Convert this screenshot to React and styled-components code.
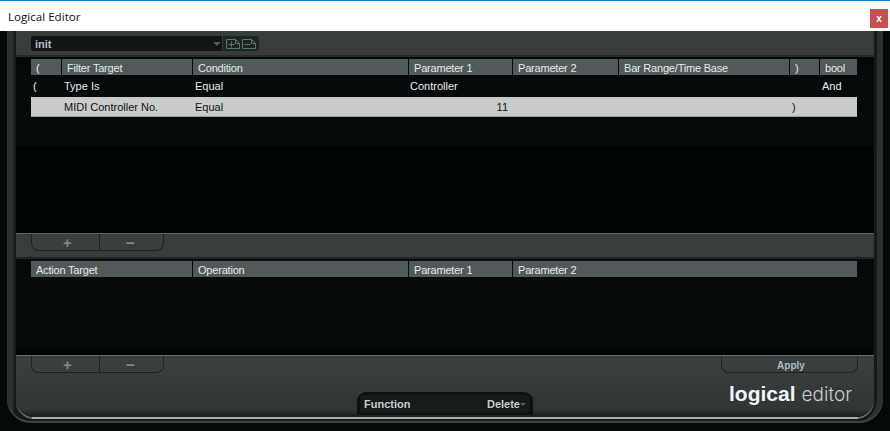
import styled, { createGlobalStyle } from "styled-components";

const GlobalStyle = createGlobalStyle`
  html, body, #root {
    margin: 0;
    padding: 0;
    height: 100%;
    overflow: hidden;
    background: #050909;
  }
`;

const Window = styled.div`
  width: 890px;
  height: 431px;
  display: flex;
  flex-direction: column;
  font-family: "Liberation Sans", Arial, sans-serif;
  font-size: 11px;
`;

const TitleBar = styled.div`
  height: 30px;
  flex: none;
  display: flex;
  align-items: center;
  justify-content: space-between;
  background: #fff;
  border-top: 1px solid #0f84d8;
  padding: 0 2px 0 8px;
  color: #111;
  font-family: "Open Sans", sans-serif;
  font-size: 11.6px;
`;

const CloseButton = styled.div`
  width: 18px;
  height: 19px;
  margin-top: 4px;
  display: flex;
  align-items: center;
  justify-content: center;
  background: #c75050;
  color: #fff;
  font-family: "Liberation Sans", sans-serif;
  font-size: 10px;
  font-weight: bold;
`;

const Bezel = styled.div`
  flex: 1;
  min-height: 0;
  margin: 0 7px 8px;
  padding: 0 9px 6px;
  display: flex;
  background: linear-gradient(90deg, #2c3030 0, #2c3030 6px, #171a1a 7px, #171a1a 100%);
  border-radius: 0 0 24px 24px;
  box-shadow: inset 0 -2px 0 #3f4343, inset -6px 0 0 #2c3030;
`;

const Panel = styled.div`
  flex: 1;
  min-width: 0;
  display: flex;
  flex-direction: column;
  position: relative;
  background: #050909;
  border-radius: 0 0 18px 18px;
  box-shadow: 0 2px 0 #686c6c;

  &::after {
    content: "";
    position: absolute;
    left: 16px;
    right: 16px;
    bottom: -2px;
    height: 2px;
    background: #a9acac;
  }
`;

const Toolbar = styled.div`
  height: 26px;
  flex: none;
  box-sizing: border-box;
  padding: 5px 0 0 15px;
  background: #373d3d;
  border-bottom: 2px solid #262a2a;
`;

const PresetBox = styled.div`
  width: 228px;
  height: 15px;
  display: flex;
  align-items: center;
  background: #1e2323;
  border-radius: 3px;
`;

const PresetName = styled.div`
  width: 192px;
  height: 100%;
  box-sizing: border-box;
  padding-left: 4px;
  display: flex;
  align-items: center;
  justify-content: space-between;
  background: #111515;
  border-radius: 3px 0 0 3px;
  border-right: 1px solid #3a4040;
  color: #b9c0c0;
  font-weight: bold;
`;

const Caret = styled.span`
  width: 0;
  height: 0;
  margin-right: ${(p) => p.$gap ?? 1}px;
  border-left: ${(p) => p.$size}px solid transparent;
  border-right: ${(p) => p.$size}px solid transparent;
  border-top: ${(p) => p.$size}px solid #555b5b;
`;

const IconGroup = styled.div`
  display: flex;
  gap: 2px;
  padding-left: 3px;
`;

const Columns = styled.div`
  height: 16px;
  flex: none;
  margin: 2px 17px 0 15px;
  display: grid;
  grid-template-columns: ${(p) => p.$cols};
  column-gap: 1px;
`;

const HeaderCell = styled.div`
  background: #505a5a;
  color: #e6eaea;
  padding-left: 5px;
  line-height: 18px;
  letter-spacing: -0.2px;
  white-space: nowrap;
  overflow: hidden;
`;

const EventList = styled.div`
  height: ${(p) => p.$height}px;
  flex: none;
  padding: 0 17px 0 15px;
  background: linear-gradient(180deg, #060a0a 0, #060a0a 71px, #020505 71px);
`;

const Row = styled.div`
  height: ${(p) => (p.$selected ? 20 : 21)}px;
  box-sizing: border-box;
  margin-bottom: ${(p) => (p.$selected ? 0 : 1)}px;
  display: grid;
  grid-template-columns: ${(p) => p.$cols};
  column-gap: 1px;
  align-items: center;
  background: ${(p) => (p.$selected ? "#c9cbc9" : "transparent")};
  border-bottom: ${(p) => (p.$selected ? "1px solid #979a98" : "none")};
  color: ${(p) => (p.$selected ? "#101414" : "#e8ecec")};
`;

const Cell = styled.div`
  padding-left: ${(p) => p.$pad ?? 2}px;
  padding-right: 4px;
  text-align: ${(p) => (p.$right ? "right" : "left")};
  white-space: nowrap;
`;

const Strip = styled.div`
  height: 26px;
  flex: none;
  box-sizing: border-box;
  background: #373d3d;
  border-top: 1px solid #5d6262;
  border-bottom: 2px solid #202424;
  padding-left: 15px;
`;

const ButtonPair = styled.div`
  width: 133px;
  height: 17px;
  display: flex;
  box-sizing: border-box;
  border: 1px solid #1d2121;
  border-top: none;
  border-radius: 0 0 8px 8px;
  background: #393f3f;
`;

const PairButton = styled.div`
  width: ${(p) => p.$width}px;
  box-sizing: border-box;
  padding: 0 ${(p) => p.$right}px 0 ${(p) => p.$left}px;
  display: flex;
  align-items: center;
  justify-content: center;
  color: #858a8a;
  font-size: 15px;
  font-weight: bold;
  line-height: 1;
  & + & {
    border-left: 1px solid #1d2121;
  }
`;

const Footer = styled.div`
  flex: 1;
  min-height: 0;
  display: flex;
  flex-direction: column;
  background: linear-gradient(180deg, #3a3f3f 0, #303535 88%, #1a1d1d 100%);
  border-top: 1px solid #6a6f6f;
  border-radius: 0 0 18px 18px;
`;

const FooterTop = styled.div`
  display: flex;
  justify-content: space-between;
  padding: 0 16px 0 15px;
`;

const ApplyButton = styled.div`
  width: 137px;
  height: 17px;
  box-sizing: border-box;
  padding-left: 3px;
  border: 1px solid #1d2121;
  border-top: none;
  border-radius: 0 0 8px 8px;
  text-align: center;
  color: #a9bcc6;
  font-size: 10px;
  font-weight: bold;
  line-height: 20px;
`;

const FooterBottom = styled.div`
  flex: 1;
  display: grid;
  grid-template-columns: 1fr auto 1fr;
  align-items: end;
`;

const FunctionTab = styled.div`
  grid-column: 2;
  width: 176px;
  height: 23px;
  margin-bottom: 2px;
  box-sizing: border-box;
  padding: 3px 3px 0;
  background: #0e1111;
  border-radius: 9px 9px 0 0;
`;

const FunctionInner = styled.div`
  height: 18px;
  display: flex;
  align-items: center;
  justify-content: space-between;
  padding: 0 4px;
  background: #171a1a;
  border-radius: 4px;
  color: #c3cfd4;
  font-weight: bold;
`;

const DeleteValue = styled.span`
  display: flex;
  align-items: center;
`;

const Logo = styled.div`
  grid-column: 3;
  justify-self: end;
  margin: 0 22px 10px 0;
  color: #f2f4f4;
  font-family: "Liberation Sans", sans-serif;
  font-size: 21px;
  line-height: 24px;
  white-space: nowrap;
`;

const LogoBold = styled.b`
  font-weight: bold;
`;

const LogoLight = styled.span`
  font-family: Inter, sans-serif;
  font-weight: 300;
  font-size: 19px;
  color: #c8cccc;
  margin-left: 6px;
`;

const filterCols = "30px 130px 215px 103px 105px 170px 29px 37px";
const actionCols = "161px 215px 103px 344px";

const filterHeads = ["(", "Filter Target", "Condition", "Parameter 1", "Parameter 2", "Bar Range/Time Base", ")", "bool"];
const actionHeads = ["Action Target", "Operation", "Parameter 1", "Parameter 2"];

const PresetIcon = ({ minus }) => (
  <svg width="14" height="10" viewBox="0 0 14 10" fill="none" stroke="#5f7470" strokeWidth="1">
    <path d="M.5.5h9l4 4v5H.5z" />
    <path d="M9.5.5v4h4" />
    <path d="M2.5 5.5h6" />
    {!minus && <path d="M5.5 2.5v6" />}
  </svg>
);

const AddRemove = () => (
  <ButtonPair>
    <PairButton $width={67} $left={4} $right={0}>+</PairButton>
    <PairButton $width={64} $left={0} $right={2}>−</PairButton>
  </ButtonPair>
);

const App = () => (
  <Window>
    <GlobalStyle />
    <TitleBar>
      Logical Editor
      <CloseButton>x</CloseButton>
    </TitleBar>
    <Bezel>
      <Panel>
        <Toolbar>
          <PresetBox>
            <PresetName>
              init
              <Caret $size={4} />
            </PresetName>
            <IconGroup>
              <PresetIcon />
              <PresetIcon minus />
            </IconGroup>
          </PresetBox>
        </Toolbar>
        <Columns $cols={filterCols}>
          {filterHeads.map((h) => (
            <HeaderCell key={h}>{h}</HeaderCell>
          ))}
        </Columns>
        <EventList $height={158}>
          <Row $cols={filterCols}>
            <Cell>(</Cell>
            <Cell>Type Is</Cell>
            <Cell>Equal</Cell>
            <Cell $pad={1}>Controller</Cell>
            <Cell />
            <Cell />
            <Cell />
            <Cell>And</Cell>
          </Row>
          <Row $cols={filterCols} $selected>
            <Cell />
            <Cell>MIDI Controller No.</Cell>
            <Cell>Equal</Cell>
            <Cell $right>11</Cell>
            <Cell />
            <Cell />
            <Cell>)</Cell>
            <Cell />
          </Row>
        </EventList>
        <Strip>
          <AddRemove />
        </Strip>
        <Columns $cols={actionCols}>
          {actionHeads.map((h) => (
            <HeaderCell key={h}>{h}</HeaderCell>
          ))}
        </Columns>
        <EventList $height={78} />
        <Footer>
          <FooterTop>
            <AddRemove />
            <ApplyButton>Apply</ApplyButton>
          </FooterTop>
          <FooterBottom>
            <FunctionTab>
              <FunctionInner>
                Function
                <DeleteValue>
                  Delete
                  <Caret $size={3} $gap={0} />
                </DeleteValue>
              </FunctionInner>
            </FunctionTab>
            <Logo>
              <LogoBold>logical</LogoBold>
              <LogoLight>editor</LogoLight>
            </Logo>
          </FooterBottom>
        </Footer>
      </Panel>
    </Bezel>
  </Window>
);

export default App;
